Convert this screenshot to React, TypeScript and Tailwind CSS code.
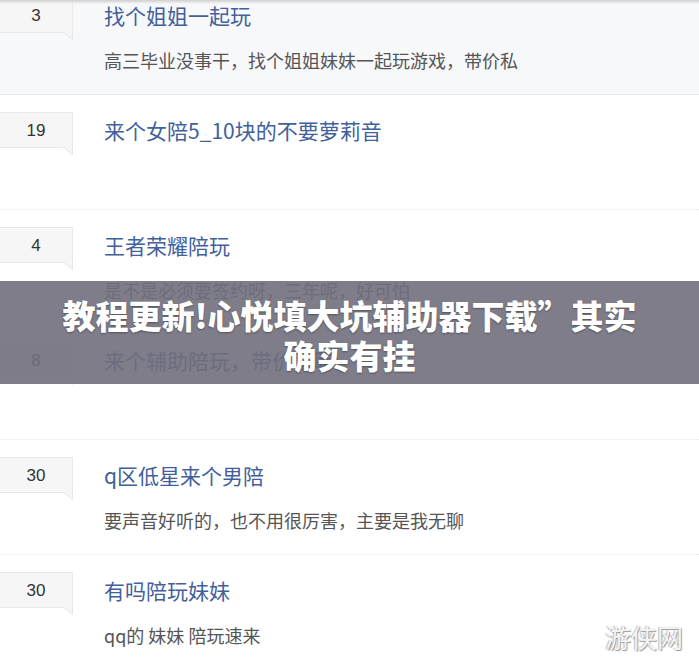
import React from "react";

type Row = { n: string; title: string; desc?: string; active?: boolean };

const rows: Row[] = [
  { n: "3", title: "找个姐姐一起玩", desc: "高三毕业没事干，找个姐姐妹妹一起玩游戏，带价私", active: true },
  { n: "19", title: "来个女陪5_10块的不要萝莉音" },
  { n: "4", title: "王者荣耀陪玩", desc: "是不是必须要签约呀，三年呢，好可怕" },
  { n: "8", title: "来个辅助陪玩，带价私聊" },
  { n: "30", title: "q区低星来个男陪", desc: "要声音好听的，也不用很厉害，主要是我无聊" },
  { n: "30", title: "有吗陪玩妹妹", desc: "qq的 妹妹 陪玩速来" },
];

function Badge({ n }: { n: string }) {
  return (
    <div className="relative w-[73px] h-[36px] shrink-0">
      <div className="w-full h-full pt-[1px] bg-[#f6f6f6] border border-l-0 border-[#e9e9e9] flex items-center justify-center text-[17px] text-[#333] font-['Liberation_Sans',Arial,sans-serif]">
        {n}
      </div>
      <svg className="absolute right-0 top-[35px]" width="10" height="8" viewBox="0 0 10 8">
        <path d="M0 0 L10 0 L10 8 Z" fill="#f6f6f6" />
        <path d="M1 0.5 L9.5 7.5 L9.5 0" fill="none" stroke="#e6e6e6" strokeWidth="1" />
      </svg>
    </div>
  );
}

export default function App() {
  return (
    <div className="relative w-[699px] h-[666px] overflow-hidden bg-white font-['Noto_Sans_CJK_SC','Microsoft_YaHei',sans-serif]">
      <div className="-mt-5 flex flex-col">
        {rows.map((r, i) => (
          <div
            key={i}
            className={`h-[115px] flex pt-[17px] border-b border-dotted border-[#e6e8ec] ${r.active ? "bg-[#f7f8fa] border-solid" : ""}`}
          >
            <Badge n={r.n} />
            <div className="ml-[31px] flex flex-col">
              <div className="h-[36px] leading-[36px] text-[21px] text-[#41609c] whitespace-nowrap">{r.title}</div>
              {r.desc && (
                <div className="mt-[9px] h-[36px] leading-[36px] text-[18px] text-[#555] whitespace-nowrap">{r.desc}</div>
              )}
            </div>
          </div>
        ))}
      </div>

      <div className="absolute left-0 top-0 w-full h-[4px] bg-gradient-to-b from-[#cfcfcf] to-transparent" />

      <div className="absolute left-0 top-[281px] w-full h-[103px] bg-[#706f7c]/[0.9] flex flex-col items-center pt-[14px]">
        <div className="text-white font-black text-[33px] leading-[40px] whitespace-nowrap [text-shadow:0_1px_2px_rgba(0,0,0,0.35)]">
          教程更新!心悦填大坑辅助器下载”其实
        </div>
        <div className="text-white font-black text-[33px] leading-[40px] whitespace-nowrap [text-shadow:0_1px_2px_rgba(0,0,0,0.35)]">
          确实有挂
        </div>
      </div>

      <div className="absolute left-[605px] top-[620px] text-[26px] leading-[34px] text-[#f4f4f4] [text-shadow:1px_1px_1px_#9a9a9a,-1px_0_1px_#bbb] font-['Noto_Sans_CJK_SC',sans-serif]">
        游侠网
      </div>
    </div>
  );
}
